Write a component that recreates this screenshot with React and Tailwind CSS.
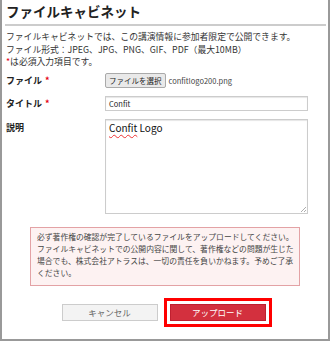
import React from 'react';

const jp = { fontFamily: '"Noto Sans CJK JP", "Noto Sans", sans-serif' };

function Req() {
  return <span className="text-[#e60012] ml-[3px]">*</span>;
}

export default function App() {
  return (
    <div
      style={jp}
      className="w-[330px] h-[341px] bg-white border-l-2 border-r-2 border-b-2 border-[#999] text-[#333] overflow-hidden"
    >
      {/* Header */}
      <div className="pl-[3px] pr-[2px] pt-[2px]">
        <h1 className="text-[13.5px] font-bold leading-[19px] pl-[1px] text-[#222]">ファイルキャビネット</h1>
        <div className="mt-[3px] h-[2px] bg-[#ccc]" />
      </div>

      {/* Intro */}
      <div className="pl-[4px] pt-[5px] text-[8.8px] leading-[12.5px]">
        <p>ファイルキャビネットでは、この講演情報に参加者限定で公開できます。</p>
        <p>ファイル形式：JPEG、JPG、PNG、GIF、PDF（最大10MB）</p>
        <p>
          <span className="text-[#e60012]">*</span>は必須入力項目です。
        </p>
      </div>

      {/* Form */}
      <div className="pl-[4px] pt-[4px] text-[9px]">
        <div className="flex items-center h-[16px]">
          <div className="w-[99px] font-bold text-[#222]">
            ファイル<Req />
          </div>
          <button className="h-[15px] px-[3px] border border-[#aaa] bg-[#e9e9e9] rounded-[2px] text-[7.5px] leading-[13px] text-[#222]">
            ファイルを選択
          </button>
          <span className="ml-[3px] text-[7.5px] text-[#444]">confitlogo200.png</span>
        </div>

        <div className="flex items-center h-[16px] mt-[7px]">
          <div className="w-[99px] font-bold text-[#222]">
            タイトル<Req />
          </div>
          <div className="w-[203px] h-[15px] border border-[#ccc] shadow-[inset_0_1px_1px_rgba(0,0,0,0.1)] pl-[3px] text-[7.5px] leading-[13px] text-[#222]">
            Confit
          </div>
        </div>

        <div className="flex mt-[7px]">
          <div className="w-[99px] font-bold text-[#222] pt-[2px]">説明</div>
          <div className="relative w-[203px] h-[95px] border border-[#ccc] shadow-[inset_0_1px_1px_rgba(0,0,0,0.1)] pl-[3px] pt-[1px] text-[10px] leading-[14px] text-[#111]">
            <span className="underline decoration-wavy decoration-[#e33] decoration-1 underline-offset-2">Confit</span> Logo
            <svg className="absolute right-[1px] bottom-[1px]" width="6" height="6" viewBox="0 0 6 6">
              <path d="M6 1 L1 6 M6 4 L4 6" stroke="#999" strokeWidth="0.8" />
            </svg>
          </div>
        </div>
      </div>

      {/* Notice */}
      <div className="mx-[28px] mt-[13px] h-[59px] border border-[#e3a2a5] bg-[#fdf2f2] pl-[6px] pt-[3px] text-[7.8px] leading-[12.3px] text-[#444]">
        <p>必ず著作権の確認が完了しているファイルをアップロードしてください。</p>
        <p>ファイルキャビネットでの公開内容に関して、著作権などの問題が生じた場合でも、株式会社アトラスは、一切の責任を負いかねます。予めご了承ください。</p>
      </div>

      {/* Buttons */}
      <div className="flex items-center justify-center gap-[6px] mt-[12px] pl-[3px]">
        <button className="w-[96px] h-[17px] border border-[#ccc] bg-[#f3f3f3] text-[8.5px] text-[#666] leading-[15px]">
          キャンセル
        </button>
        <div className="border-[3px] border-[#ff0000] p-[3px]">
          <button className="block w-[96px] h-[17px] bg-[#d3303e] border border-[#c02030] text-[8.5px] text-white leading-[15px]">
            アップロード
          </button>
        </div>
      </div>
    </div>
  );
}
